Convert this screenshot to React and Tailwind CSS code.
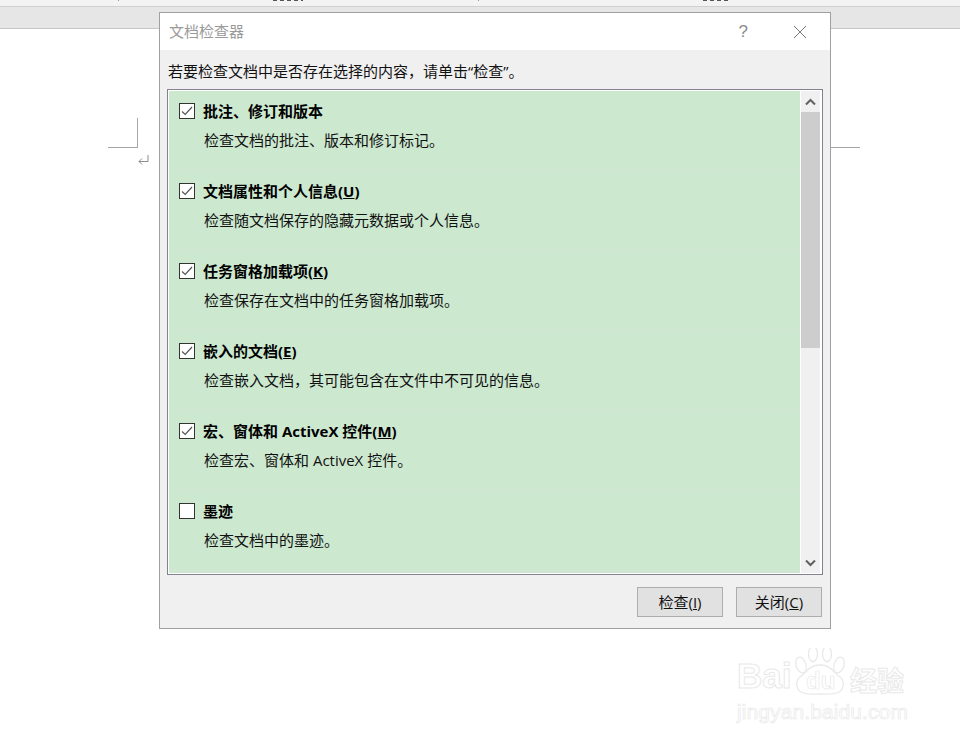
const items = [
  { title: "批注、修订和版本", desc: "检查文档的批注、版本和修订标记。", checked: true },
  { title: "文档属性和个人信息(", key: "U", desc: "检查随文档保存的隐藏元数据或个人信息。", checked: true },
  { title: "任务窗格加载项(", key: "K", desc: "检查保存在文档中的任务窗格加载项。", checked: true },
  { title: "嵌入的文档(", key: "E", desc: "检查嵌入文档，其可能包含在文件中不可见的信息。", checked: true },
  { title: "宏、窗体和 ActiveX 控件(", key: "M", desc: "检查宏、窗体和 ActiveX 控件。", checked: true },
  { title: "墨迹", desc: "检查文档中的墨迹。", checked: false },
];

function Item({ item }) {
  return (
    <div className="h-[80px] shrink-0 border-b border-[#d6e4d6] pl-[10px] pt-[10px]">
      <div className="flex h-[20px] items-center">
        <div className="flex h-[16px] w-[16px] items-center justify-center border border-[#333333] bg-white">
          {item.checked && (
            <svg width="14" height="14" viewBox="0 0 14 14" fill="none" stroke="#555555" strokeWidth="1.2">
              <path d="M2 7.5l3.2 3L12 3" />
            </svg>
          )}
        </div>
        <div className="ml-[8px] text-[15px] font-bold leading-[20px] text-black">
          {item.title}
          {item.key && (
            <>
              <span className="underline">{item.key}</span>)
            </>
          )}
        </div>
      </div>
      <div className="ml-[25px] mt-[9px] text-[15px] leading-[20px] text-[#111111]">{item.desc}</div>
    </div>
  );
}

function DialogButton({ label, hot }) {
  return (
    <button className="h-[30px] w-[86px] border border-[#adadad] bg-[#e1e1e1] text-[15px] text-[#111111]">
      {label}(<span className="underline">{hot}</span>)
    </button>
  );
}

function Watermark() {
  return (
    <div className="absolute left-[737px] top-[648px] w-[175px] select-none text-white">
      <div className="flex h-[48px] items-end">
        <span className="w-[57px] text-[35px] font-bold leading-[40px] [-webkit-text-stroke:1px_#e9e9e9] [font-family:'Liberation_Sans',sans-serif]">Bai</span>
        <svg width="52" height="48" viewBox="0 0 52 48" fill="none" stroke="#e9e9e9" strokeWidth="1.3">
          <path d="M7 44c-5-3-6-11-1-15 6-4 9-12 20-12s14 8 20 12c5 4 4 12-1 15-5 3-11 2-19 2s-14 1-19-2z" />
          <ellipse cx="7" cy="17" rx="5" ry="8" transform="rotate(-18 7 17)" />
          <ellipse cx="19" cy="6" rx="4.5" ry="7.5" />
          <ellipse cx="33" cy="6" rx="4.5" ry="7.5" />
          <ellipse cx="45" cy="17" rx="5" ry="8" transform="rotate(18 45 17)" />
          <text x="12" y="41" fontSize="24" fontWeight="700" fill="white" stroke="#e9e9e9" strokeWidth="0.7" fontFamily="Liberation Sans, sans-serif">du</text>
        </svg>
        <span className="ml-[4px] text-[27px] font-bold leading-[30px] [-webkit-text-stroke:1px_#e9e9e9]">经验</span>
      </div>
      <div className="mt-[4px] text-[21px] leading-[24px] tracking-[0.1px] [-webkit-text-stroke:0.7px_#e9e9e9] [font-family:'Liberation_Sans',sans-serif]">jingyan.baidu.com</div>
    </div>
  );
}

export default function App() {
  return (
    <div className="relative h-[744px] w-[960px] overflow-hidden bg-white [font-family:'Open_Sans','Noto_Sans_CJK_SC',sans-serif]">
      {/* word window behind the dialog */}
      <div className="h-[7px] border-b border-[#d0d0d0] bg-[#f3f3f3]"></div>
      <div className="h-[22px] border-b border-[#c6c6c6] bg-[#e6e6e6]"></div>
      <svg className="absolute left-0 top-0" width="960" height="2" viewBox="0 0 960 2" stroke="#555555" strokeWidth="2" strokeDasharray="4 3">
        <path d="M273 0h30M703 0h28" />
        <path d="M118 0h1M478 0h1" stroke="#9a9a9a" />
      </svg>
      <div className="absolute left-[108px] top-[118px] h-[30px] w-[30px] border-b border-r border-[#a6a6a6]"></div>
      <div className="absolute left-[831px] top-[147px] h-px w-[29px] bg-[#a6a6a6]"></div>
      <svg className="absolute left-[137px] top-[154px]" width="13" height="12" viewBox="0 0 13 12" fill="none" stroke="#8c8c8c" strokeWidth="1">
        <path d="M11 1v6.5H2M5 4.5L2 7.5l3 3" />
      </svg>

      <div className="absolute left-[159px] top-[12px] flex h-[617px] w-[672px] flex-col border border-[#a0a0a0] bg-[#f0f0f0]">
        <div className="flex h-[37px] shrink-0 items-center bg-white pl-[9px] text-[15px] text-[#9a9a9a]">
          <span>文档检查器</span>
          <span className="ml-auto mr-[45px] text-[17px] text-[#8a8a8a] [font-family:'Liberation_Sans',sans-serif]">?</span>
          <svg className="mr-[23px]" width="14" height="14" viewBox="0 0 14 14" fill="none" stroke="#777777" strokeWidth="1">
            <path d="M1 1l12 12M13 1L1 13" />
          </svg>
        </div>
        <div className="ml-[8px] mt-[11px] h-[20px] text-[15px] leading-[20px] text-[#111111]">若要检查文档中是否存在选择的内容，请单击“检查”。</div>
        <div className="ml-[7px] mt-[8px] flex h-[486px] w-[656px] border border-[#83838f] bg-white p-px">
          <div className="flex h-[482px] w-[631px] flex-col overflow-hidden bg-[#cce8cf]">
            {items.map((item) => (
              <Item key={item.desc} item={item} />
            ))}
          </div>
          <div className="ml-px flex w-[19px] flex-col bg-[#f0f0f0]">
            <div className="flex h-[21px] items-center justify-center">
              <svg width="11" height="8" viewBox="0 0 11 8" fill="none" stroke="#606060" strokeWidth="2">
                <path d="M1 6.5l4.5-4.5 4.5 4.5" />
              </svg>
            </div>
            <div className="h-[236px] bg-[#cdcdcd]"></div>
            <div className="mt-auto flex h-[21px] items-center justify-center">
              <svg width="11" height="8" viewBox="0 0 11 8" fill="none" stroke="#606060" strokeWidth="2">
                <path d="M1 1.5l4.5 4.5 4.5-4.5" />
              </svg>
            </div>
          </div>
        </div>
        <div className="mr-[8px] mt-[12px] flex justify-end gap-[13px]">
          <DialogButton label="检查" hot="I" />
          <DialogButton label="关闭" hot="C" />
        </div>
      </div>
      <Watermark />
    </div>
  );
}
